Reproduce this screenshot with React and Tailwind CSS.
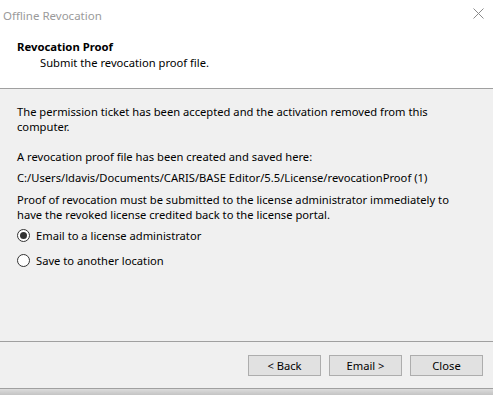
import React from "react";

function Radio({ checked, label }) {
  return (
    <div className="flex items-center h-4">
      <div className="w-[13px] h-[13px] rounded-full border border-[#333333] bg-white flex items-center justify-center shrink-0">
        {checked && <div className="w-[7px] h-[7px] rounded-full bg-[#333333]" />}
      </div>
      <span className="ml-[6px]">{label}</span>
    </div>
  );
}

function Btn({ children }) {
  return (
    <div className="w-[73px] h-[21px] border border-[#adadad] bg-[#e1e1e1] flex items-center justify-center text-black leading-none">
      {children}
    </div>
  );
}

export default function App() {
  return (
    <div
      className="w-[493px] h-[395px] bg-[#f0f0f0] flex flex-col text-[11.2px] leading-[15px] text-black overflow-hidden"
      style={{ fontFamily: '"Noto Sans", "Open Sans", sans-serif' }}
    >
      <div className="bg-white h-[88px] flex flex-col shrink-0">
        <div className="h-[30px] flex items-center justify-between pl-[3px] pr-[8px] shrink-0">
          <span className="text-[#9a9a9a] text-[11.5px]">Offline Revocation</span>
          <svg width="11" height="11" viewBox="0 0 11 11" className="mr-[1px] mb-[3px]">
            <path d="M0.5 0.5 L10.5 10.5 M10.5 0.5 L0.5 10.5" stroke="#8a8a8a" strokeWidth="1" />
          </svg>
        </div>
        <div className="pt-[9px] pl-[17px] leading-[16px]">
          <div className="font-bold text-[11.3px]">Revocation Proof</div>
          <div className="pl-[23px]">Submit the revocation proof file.</div>
        </div>
      </div>
      <div className="h-px bg-[#a0a0a0] shrink-0" />
      <div className="flex-1 px-[17px] pt-[15px]">
        <p>The permission ticket has been accepted and the activation removed from this computer.</p>
        <p className="mt-[15px]">A revocation proof file has been created and saved here:</p>
        <p className="mt-[6px]">C:/Users/ldavis/Documents/CARIS/BASE Editor/5.5/License/revocationProof (1)</p>
        <p className="mt-[7px]">Proof of revocation must be submitted to the license administrator immediately to have the revoked license credited back to the license portal.</p>
        <div className="mt-[5px]">
          <Radio checked label="Email to a license administrator" />
        </div>
        <div className="mt-[9px]">
          <Radio label="Save to another location" />
        </div>
      </div>
      <div className="h-px bg-[#a0a0a0] shrink-0" />
      <div className="h-[46px] flex justify-end items-start pt-[13px] pr-[10px] gap-[8px] shrink-0">
        <Btn>&lt; Back</Btn>
        <Btn>Email &gt;</Btn>
        <Btn>Close</Btn>
      </div>
      <div className="h-px bg-[#a0a0a0] shrink-0" />
      <div className="h-[6px] bg-gradient-to-b from-[#dcdcdc] to-[#c4c4c4] shrink-0" />
    </div>
  );
}
